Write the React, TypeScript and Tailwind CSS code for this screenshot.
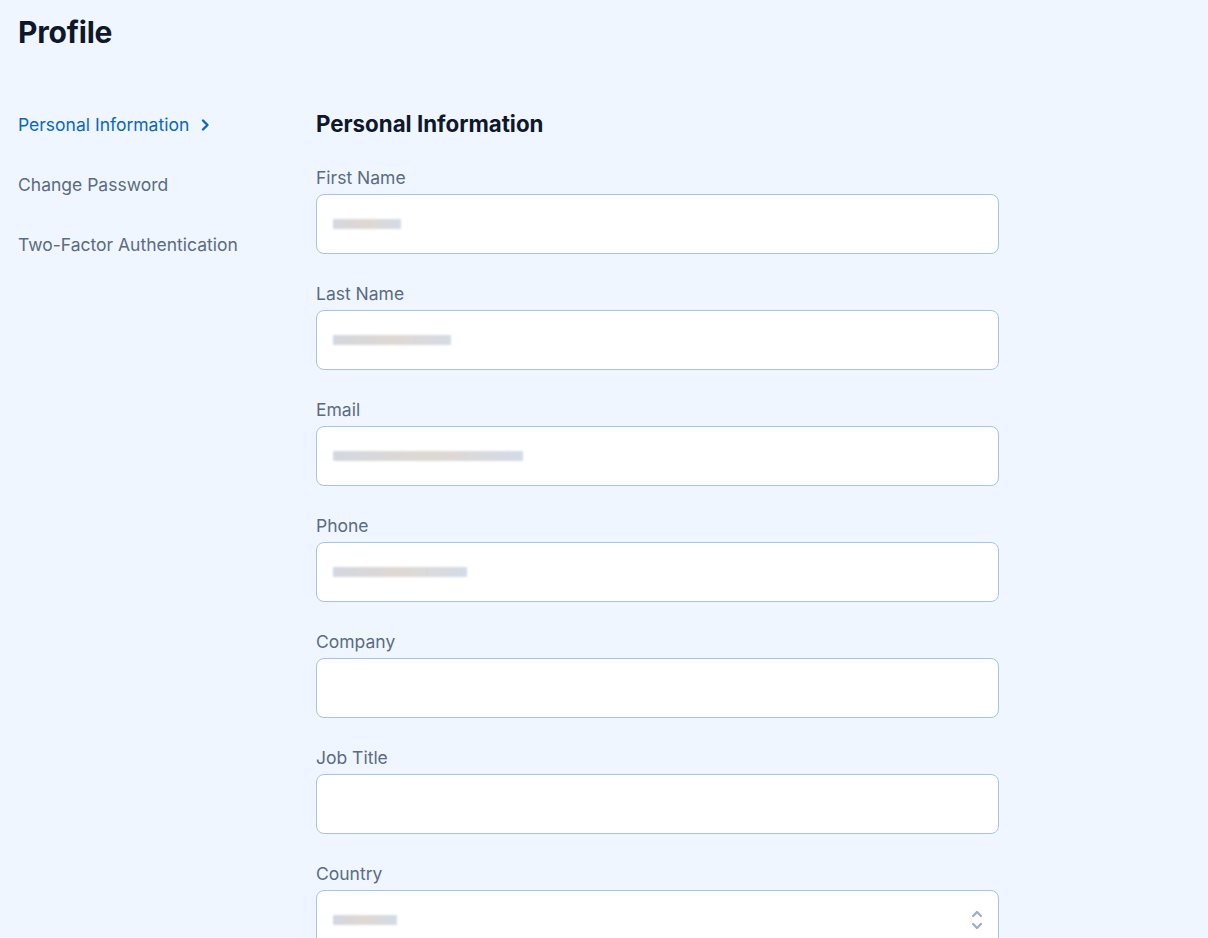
import React from "react";

const fields: [string, string][] = [
  ["First Name", "w-[68px]"],
  ["Last Name", "w-[118px]"],
  ["Email", "w-[190px]"],
  ["Phone", "w-[134px]"],
  ["Company", ""],
  ["Job Title", ""],
];

function Blur({ w }: { w: string }) {
  return <span className={`inline-block h-[10px] ${w} bg-gradient-to-r from-[#c9ced8] via-[#d8cfc8] to-[#c9d3e0] opacity-80 blur-[1px]`} />;
}

export default function App() {
  return (
    <div className="min-h-[938px] bg-[#eff6ff] text-[#0f172a]" style={{ fontFamily: "Inter, 'Noto Sans', sans-serif" }}>
      <div className="px-[18px] pt-[14px]">
        <h1 className="text-[30px] font-bold leading-[36px] tracking-[-0.2px]">Profile</h1>
        <div className="mt-[63px] flex">
          <nav className="w-[298px] shrink-0 flex flex-col gap-[36px] text-[17.5px] leading-[24px] text-[#5b6b82]">
            <a className="flex items-center gap-[10px] text-[#0a66c2]">
              Personal Information
              <svg width="12" height="14" viewBox="0 0 12 14" fill="none" stroke="#0a66c2" strokeWidth="2.4" strokeLinecap="round" strokeLinejoin="round"><path d="M4 2.5 8.5 7 4 11.5" /></svg>
            </a>
            <a>Change Password</a>
            <a>Two-Factor Authentication</a>
          </nav>
          <main className="w-[683px]">
            <h2 className="text-[22.3px] font-bold leading-[24px] mt-[-1px]">Personal Information</h2>
            <div className="mt-[32px] flex flex-col gap-[30px]">
              {fields.map(([label, w]) => (
                <div key={label}>
                  <div className="text-[17.5px] leading-[20px] text-[#5b6b82]">{label}</div>
                  <div className="mt-[6px] h-[60px] rounded-[8px] border border-[#a9c4e3] bg-white flex items-center px-[16px]">
                    {w && <Blur w={w} />}
                  </div>
                </div>
              ))}
              <div>
                <div className="text-[17.5px] leading-[20px] text-[#5b6b82]">Country</div>
                <div className="mt-[6px] h-[60px] rounded-[8px] border border-[#a9c4e3] bg-white flex items-center justify-between px-[16px]">
                  <Blur w="w-[64px]" />
                  <svg width="14" height="24" viewBox="0 0 14 24" fill="none" stroke="#9aaecb" strokeWidth="2.2" strokeLinecap="round" strokeLinejoin="round" className="mr-[-2px]"><path d="M3 8l4-4 4 4M3 16l4 4 4-4" /></svg>
                </div>
              </div>
            </div>
          </main>
        </div>
      </div>
    </div>
  );
}
